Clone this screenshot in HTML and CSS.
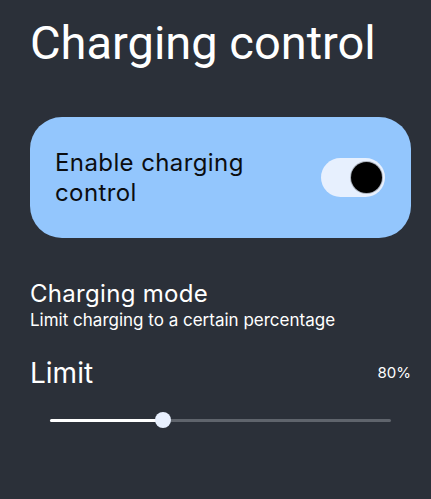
FILE: index.html
```html
<!DOCTYPE html>
<html lang="en">
<head>
<meta charset="utf-8">
<title>Charging control</title>
<link rel="stylesheet" href="styles.css">
</head>
<body>
<main class="page">
  <h1 class="title">Charging control</h1>

  <section class="card">
    <span class="card-label">Enable charging control</span>
    <span class="switch" role="switch" aria-checked="true">
      <span class="switch-thumb"></span>
    </span>
  </section>

  <section class="mode">
    <h2 class="mode-title">Charging mode</h2>
    <p class="mode-desc">Limit charging to a certain percentage</p>
  </section>

  <div class="limit-row">
    <span class="limit-label">Limit</span>
    <span class="limit-value">80%</span>
  </div>

  <div class="slider">
    <div class="slider-track">
      <div class="slider-fill" style="width: 33%"></div>
      <div class="slider-thumb" style="left: 33%"></div>
    </div>
  </div>
</main>
</body>
</html>
```

FILE: styles.css
```css
html, body {
  margin: 0;
  padding: 0;
  background: #2b3039;
}

body {
  font-family: Inter, Roboto, sans-serif;
  color: #ffffff;
}

.page {
  padding: 15px 20px 0 30px;
}

.title {
  margin: 0;
  font-family: Roboto, sans-serif;
  font-size: 47px;
  font-weight: 400;
  line-height: 56px;
}

.card {
  margin-top: 46px;
  height: 121px;
  box-sizing: border-box;
  padding: 0 26px 0 25px;
  background: #93c6fd;
  border-radius: 32px;
  display: flex;
  align-items: center;
  justify-content: space-between;
  color: #0b0d10;
}

.card-label {
  max-width: 225px;
  font-size: 24px;
  letter-spacing: 0.4px;
  line-height: 30px;
}

.switch {
  width: 64px;
  height: 39px;
  box-sizing: border-box;
  border-radius: 20px;
  background: #e7f0fe;
  display: flex;
  align-items: center;
  justify-content: flex-end;
  padding-right: 3px;
}

.switch-thumb {
  width: 31px;
  height: 31px;
  border-radius: 50%;
  background: #000000;
  box-shadow: 0 0 0 1px rgba(0, 0, 0, 0.25);
}

.mode {
  margin-top: 42px;
}

.mode-title {
  margin: 0;
  font-size: 24px;
  letter-spacing: 0.3px;
  font-weight: 400;
  line-height: 28px;
}

.mode-desc {
  margin: 2px 0 0;
  font-size: 17px;
  line-height: 20px;
}

.limit-row {
  margin-top: 26px;
  display: flex;
  align-items: center;
  justify-content: space-between;
}

.limit-label {
  font-size: 28px;
  line-height: 34px;
}

.limit-value {
  font-size: 15px;
  line-height: 20px;
}

.slider {
  margin: 20px 20px 0;
  height: 20px;
  display: flex;
  align-items: center;
}

.slider-track {
  position: relative;
  flex: 1;
  height: 3px;
  border-radius: 2px;
  background: #5f646c;
}

.slider-fill {
  height: 100%;
  border-radius: 2px;
  background: #ffffff;
}

.slider-thumb {
  position: absolute;
  top: 50%;
  width: 16px;
  height: 16px;
  margin: -8px 0 0 -8px;
  border-radius: 50%;
  background: #e8f0fe;
}
```
